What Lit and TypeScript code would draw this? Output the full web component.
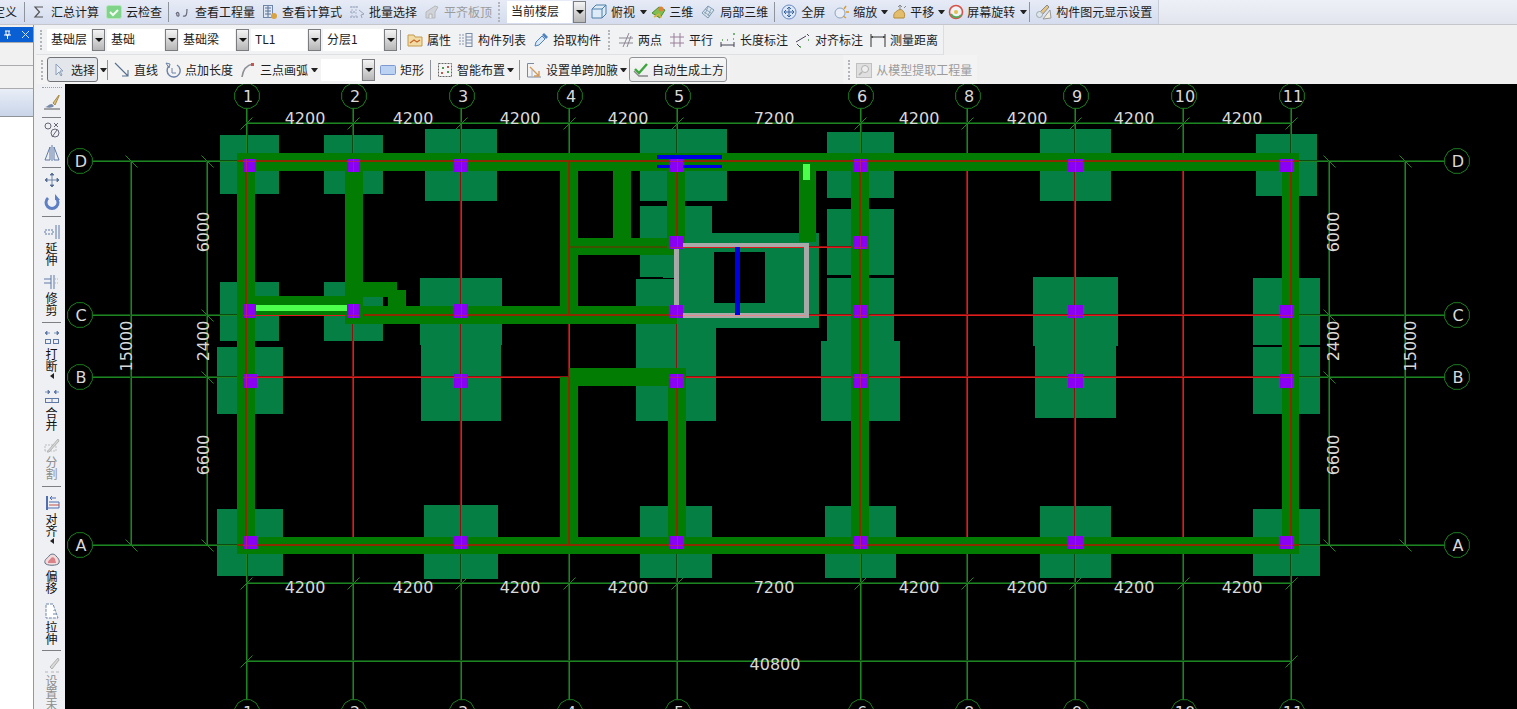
import { LitElement, html, css, svg, nothing } from 'lit';
import { customElement } from 'lit/decorators.js';

type Box = [number, number, number, number];

// ---- plan data (page coordinates, the svg viewBox starts at the canvas corner)
const GX = [246, 353, 461, 569, 677, 860, 967, 1075, 1183, 1291];
const GX_NAMES = ['1', '2', '3', '4', '5', '6', '8', '9', '10', '11'];
const GY = [161, 315, 377, 545];
const GY_NAMES = ['D', 'C', 'B', 'A'];

const FOOTINGS: Box[] = [
  [220, 135, 279, 194], [324, 135, 383, 194], [425, 129, 497, 201], [640, 129, 727, 201],
  [827, 132, 894, 198], [1040, 129, 1111, 201], [1256, 134, 1317, 196],
  [220, 282, 279, 341], [324, 282, 383, 341], [420, 278, 502, 345], [421, 345, 501, 421],
  [217, 347, 283, 414], [640, 206, 712, 278], [675, 233, 819, 328], [636, 279, 716, 421],
  [827, 209, 894, 275], [827, 278, 894, 342], [821, 341, 900, 421],
  [1033, 277, 1118, 346], [1035, 346, 1116, 418], [1253, 278, 1320, 345], [1253, 347, 1320, 414],
  [217, 509, 283, 576], [424, 505, 498, 579], [640, 506, 712, 578], [825, 506, 896, 578],
  [1040, 506, 1111, 578], [1253, 509, 1320, 576],
];
const HOLES: Box[] = [[714, 252, 765, 303]];
const BEAMS: Box[] = [
  [237, 153, 1299, 171], [237, 537, 1299, 554], [237, 153, 255, 554], [345, 153, 363, 315],
  [1282, 153, 1299, 554], [851, 153, 869, 554], [560, 153, 578, 324], [560, 377, 578, 554],
  [569, 368, 677, 386], [668, 368, 686, 554], [667, 153, 685, 247], [613, 153, 631, 238],
  [569, 238, 677, 255], [345, 306, 677, 324], [255, 296, 345, 315], [345, 282, 397, 297],
  [388, 290, 406, 306], [799, 153, 816, 242],
];
// red axis lines as they run inside the beams
const CORES: Box[] = [
  [237, 160, 1299, 162], [237, 544, 1299, 546], [245, 161, 247, 545],
  [1290, 161, 1292, 545], [859, 161, 861, 545], [568, 161, 570, 315], [568, 377, 570, 545],
  [676, 161, 678, 247], [676, 377, 678, 545], [363, 314, 677, 316],
];
const CORE_DIM: Box[] = [[569, 246, 667, 248]];
const LIGHT_FOOT: Box[] = [[363, 297, 383, 306]];
const DOTS: Box[] = [[383, 299, 388, 306], [640, 277, 663, 278], [640, 201, 667, 206], [685, 201, 712, 206]];
const FRAME: Box[] = [[674, 243, 679, 318], [679, 243, 809, 247], [804, 243, 809, 318], [674, 313, 809, 318]];
const BLUE: Box[] = [[657, 155, 722, 159], [657, 165, 722, 168], [735, 247, 740, 315]];
const BRIGHT: Box[] = [[256, 305, 347, 311], [803, 164, 810, 180]];

const COLS: Box[] = [
  [243, 159, 13, 13], [347, 159, 13, 13], [454, 159, 14, 13], [670, 159, 13, 13], [854, 159, 13, 13], [1068, 159, 15, 13], [1280, 159, 13, 13],
  [670, 236, 13, 13], [854, 236, 13, 13],
  [243, 304, 13, 14], [347, 304, 13, 14], [454, 304, 14, 14], [670, 305, 13, 13], [854, 305, 13, 13], [1068, 305, 15, 13], [1280, 305, 13, 13],
  [243, 374, 14, 14], [454, 374, 14, 14], [669, 374, 14, 14], [853, 374, 14, 14], [1068, 374, 15, 14], [1280, 374, 13, 14],
  [243, 536, 14, 13], [454, 536, 14, 13], [669, 536, 14, 13], [853, 536, 14, 13], [1068, 536, 15, 13], [1280, 536, 13, 13],
];

const SPANS: [number, string][] = [
  [305, '4200'], [413, '4200'], [520, '4200'], [628, '4200'], [774, '7200'],
  [919, '4200'], [1027, '4200'], [1134, '4200'], [1242, '4200'],
];

const GREEN: [string, string] = ['#1c8420', '#0e4a12'];
const RED: [string, string] = ['#e01c1c', '#8c1212'];

const rects = (list: Box[], fill: string) =>
  list.map(([a, b, c, d]) => svg`<rect x=${a} y=${b} width=${c - a} height=${d - b} fill=${fill}></rect>`);

// the reference lines are a bit soft: one full pixel plus a dim neighbour on the even/odd pair
const pair = (v: number) => v - (v % 2);
const hl = (y: number, a: number, b: number, [c, dim]: [string, string]) => svg`
  <rect x=${a} y=${pair(y)} width=${b - a} height="2" fill=${dim}></rect>
  <rect x=${a} y=${y} width=${b - a} height="1" fill=${c}></rect>`;
const vl = (x: number, a: number, b: number, [c, dim]: [string, string]) => svg`
  <rect x=${pair(x)} y=${a} width="2" height=${b - a} fill=${dim}></rect>
  <rect x=${x} y=${a} width="1" height=${b - a} fill=${c}></rect>`;

const bubble = (cx: number, cy: number, name: string) => {
  const pts = Array.from({ length: 12 }, (_, i) => {
    const a = (Math.PI / 6) * i + Math.PI / 12;
    return `${(cx + 12.7 * Math.cos(a)).toFixed(1)},${(cy + 12.7 * Math.sin(a)).toFixed(1)}`;
  }).join(' ');
  return svg`<polygon class="bubble" points=${pts}></polygon>
    <text class="dim" x=${cx + 1} y=${cy + 6} text-anchor="middle">${name}</text>`;
};

const tick = (x: number, y: number, up = true) =>
  svg`<line class="thin" x1=${x - 6} y1=${up ? y + 6 : y - 6} x2=${x + 6} y2=${up ? y - 6 : y + 6}></line>`;

const vtext = (x: number, y: number, t: string) =>
  svg`<text class="dim" text-anchor="middle" transform="translate(${x} ${y}) rotate(-90)">${t}</text>`;

const nearest = (list: number[], v: number) => list.reduce((p, c) => (Math.abs(c - v) < Math.abs(p - v) ? c : p));

// ---- toolbar icons, all on a 16x16 box
const ICONS: Record<string, unknown> = {
  sigma: svg`<path d="M12 3H4L8.5 8 4 13H12" fill="none" stroke="#555" stroke-width="1.2"/>`,
  cloud: svg`<rect x="0.5" y="1.5" width="15" height="13" rx="2" fill="#7fd48a" stroke="#b8e6bd"/><path d="M4 8l3 3 5-5" fill="none" stroke="#f2fbf0" stroke-width="2"/>`,
  qty: svg`<path d="M1 10c2-3 3-1 3 1s-3 1-2-1M8 12c3 1 4-1 4-7" fill="none" stroke="#667" stroke-width="1.2"/>`,
  calc: svg`<rect x="1.5" y="1.5" width="9" height="12" fill="#dfe7f3" stroke="#6f86a8"/><path d="M3 4h6M3 7h6M3 10h6M6 2v11" stroke="#5a7299"/><circle cx="12" cy="12" r="3" fill="#d9a344"/>`,
  batch: svg`<path d="M1 3h8M1 8h5M1 13h8" stroke="#8c99b5" stroke-dasharray="2 1"/><path d="M3 2v12M7 2v12" stroke="#aab4c9" stroke-dasharray="2 1"/><path d="M10 6l5 4-3 1 1 3" fill="none" stroke="#9aa5ba"/>`,
  flat: svg`<path d="M2 14V8l9-6 3 1-3 5v6z" fill="#cfd1d4" stroke="#aeb1b5"/><path d="M5 14v-4h3v4" fill="#eee" stroke="#aaa"/>`,
  cube: svg`<path d="M1 5l4-4h10v9l-4 4H1z" fill="#dcebf7" stroke="#4d7ea8"/><path d="M1 5h10v9M11 5l4-4" fill="none" stroke="#4d7ea8"/>`,
  three: svg`<path d="M1 9l7-6 6 3-5 8z" fill="#7fbf52" stroke="#4c8e35"/><circle cx="10" cy="5" r="2.5" fill="#e0833a"/><path d="M3 13l5-3 2 4" fill="none" stroke="#d7b13a" stroke-width="1.5"/>`,
  local: svg`<path d="M2 9l6-7 6 4-6 8z" fill="#dbe6ee" stroke="#7d98ae"/><path d="M5 5l6 4M4 8l6 4M8 3l-3 7M11 5l-3 7" stroke="#7d98ae" stroke-width=".8"/>`,
  full: svg`<circle cx="8" cy="8" r="7" fill="#dbe6f6" stroke="#6c8cc0"/><path d="M8 3v10M3 8h10M8 3l-2 2M8 3l2 2M8 13l-2-2M8 13l2-2M3 8l2-2M3 8l2 2M13 8l-2-2M13 8l-2 2" fill="none" stroke="#39649f"/>`,
  zoom: svg`<circle cx="7" cy="9" r="5" fill="#e9eef6" stroke="#8ea3c0"/><path d="M11 5l2-3M13 8h3M10 12l3 2" stroke="#d99b2b" stroke-width="1.4"/>`,
  pan: svg`<path d="M2 14c-1-4 1-6 3-7 2-2 5-2 6 0 2 2 2 5 1 7z" fill="#e2bd6c" stroke="#b58a35"/><path d="M8 6V1M6 3l2-2 2 2M12 4l2-2" fill="none" stroke="#8a8a8a"/>`,
  spin: svg`<circle cx="8" cy="8" r="6.5" fill="#eef3f5" stroke="#d7534a" stroke-width="1.6"/><path d="M3 10a6 6 0 0 0 10 1" fill="none" stroke="#51a85a" stroke-width="1.8"/><circle cx="8" cy="8" r="2" fill="#e2c04f"/>`,
  show: svg`<path d="M7 15l8-1-1-8z" fill="#f3eedb" stroke="#999"/><path d="M3 9l8-8 2 2-7 8z" fill="#e4c680" stroke="#8b8b8b"/><circle cx="3.5" cy="10.5" r="3" fill="#dfe5ec" stroke="#9aa"/>`,
  props: svg`<path d="M1 3h6l1 2h7v9H1z" fill="#f2dca6" stroke="#c39a4e"/><path d="M3 11l4-3 3 2 3-2" fill="none" stroke="#c86a2e" stroke-width="1.4"/>`,
  list: svg`<path d="M2 2v12M5 2v12" stroke="#8b98ad" stroke-dasharray="2 1"/><rect x="8" y="1.5" width="6" height="13" fill="#f2f4f8" stroke="#7b8aa3"/><path d="M8 5h6M8 8h6M8 11h6" stroke="#7b8aa3"/>`,
  picker: svg`<path d="M2 14l1-4 6-6 3 3-6 6z" fill="#dbe9f7" stroke="#4f83bd"/><path d="M9 3l2-2 4 4-2 2z" fill="#4f83bd"/>`,
  two: svg`<path d="M1 11h14M1 6h14M5 15L11 1M9 15l4-11" fill="none" stroke="#8d8794"/>`,
  par: svg`<path d="M1 5h14M1 11h14M5 1v14M11 1v14" fill="none" stroke="#9a7f9a"/>`,
  lendim: svg`<path d="M1 10v5M14 10v5M1 13h13" fill="none" stroke="#445"/><path d="M2 8h1M7 8h1M13 2h2M13 7h1" stroke="#4f9a4f" stroke-width="1.4"/>`,
  aligndim: svg`<path d="M2 12l3 3M1 10l10-6M12 2l2 2" fill="none" stroke="#445"/><path d="M5 15h1M13 8h1" stroke="#4f9a4f" stroke-width="1.4"/>`,
  measure: svg`<path d="M1 2v13M15 2v13M1 5h14" fill="none" stroke="#333"/><path d="M1 5l2-1v2zM15 5l-2-1v2z" fill="#333"/>`,
  cursor: svg`<path d="M5 2v11l3-3 2 4 1-1-2-4h3z" fill="#e8eef6" stroke="#8d9fb8"/>`,
  line: svg`<path d="M1 1l13 13M14 8v6H8" fill="none" stroke="#55708f" stroke-width="1.1"/>`,
  ptlen: svg`<path d="M4 4A6.5 6.5 0 1 0 12 3" fill="none" stroke="#6c82a8" stroke-width="1.4"/><path d="M1 1l4 1-1 4zM7 6v5h4" fill="none" stroke="#6c82a8"/>`,
  arc: svg`<path d="M2 15C3 8 7 3 13 2" fill="none" stroke="#8c8f93" stroke-width="1.6"/><path d="M11 1h3v3h-3z" fill="#c9534e"/>`,
  rect: svg`<rect x="0.5" y="3.5" width="15" height="9" rx="1" fill="#bcd2f2" stroke="#7d9ad0"/>`,
  smart: svg`<rect x="1.5" y="1.5" width="13" height="13" fill="#f5f5f5" stroke="#666" stroke-dasharray="2 1"/><path d="M5 5h2v2H5zM10 9h2v2h-2z" fill="#4e9a4e"/><path d="M10 4h2v2h-2zM4 10h2v2H4z" fill="#c0564e"/>`,
  haunch: svg`<path d="M1.5 15V1.5H8M1.5 15H15" fill="none" stroke="#7c8aa0"/><path d="M4 5l9 9M13 9v5H8" fill="none" stroke="#d39a5a" stroke-width="1.4"/><path d="M6 15V8" stroke="#9fb6d3"/>`,
  earth: svg`<path d="M1 9l5 5h9" fill="none" stroke="#888" stroke-width="1.4"/><path d="M2 7l4 4 8-9" fill="none" stroke="#3ea63e" stroke-width="2.4"/>`,
  extract: svg`<rect x="0.5" y="1.5" width="15" height="14" fill="#dcdcdc" stroke="#b8b8b8"/><circle cx="9" cy="7" r="3.5" fill="#eee" stroke="#a6a6a6"/><path d="M6 10l-3 3" stroke="#a6a6a6" stroke-width="1.6"/>`,
  brush: svg`<path d="M15 1l-6 8 2 2 4-9z" fill="#dcc07a" stroke="#a98b45"/><path d="M1 13c3 0 3-3 7-3l2 2c-2 2-5 2-9 1z" fill="#7687a8"/><path d="M0 15h16" stroke="#555"/>`,
  copyo: svg`<circle cx="4" cy="4" r="3" fill="none" stroke="#667"/><circle cx="11" cy="11" r="4" fill="none" stroke="#667"/><path d="M10 1l4 4M14 1l-4 4M8 15l5-7" stroke="#667"/>`,
  mirror: svg`<path d="M6 2v13H1zM10 2v13h5zM8 0v16" fill="none" stroke="#5e79a8"/>`,
  move: svg`<path d="M8 1v14M1 8h14M8 1L6 3h4zM8 15l-2-2h4zM1 8l2-2v4zM15 8l-2-2v4z" fill="#546c96" stroke="#546c96" stroke-width=".8"/>`,
  rotate: svg`<path d="M12 4a6 6 0 1 1-8 0" fill="none" stroke="#5f7fc4" stroke-width="3"/><path d="M11 0v6h5z" fill="#5f7fc4"/>`,
  extend: svg`<path d="M15 1v14M12 1v14" stroke="#5e79a8"/><path d="M1 6h8v4H1z" fill="none" stroke="#5e79a8" stroke-dasharray="2 1"/>`,
  trim: svg`<path d="M7 1v14M10 1v14" stroke="#5e79a8"/><path d="M0 5h7M0 9h7" stroke="#5e79a8"/><path d="M11 5h4M11 9h4" stroke="#aab6cc" stroke-dasharray="1 1"/>`,
  breakit: svg`<path d="M6 3H1M1 3l2-2v4zM10 3h5M15 3l-2-2v4z" fill="#5e79a8" stroke="#5e79a8" stroke-width=".8"/><rect x="1.5" y="9.5" width="5" height="4" fill="none" stroke="#5e79a8"/><rect x="9.5" y="9.5" width="5" height="4" fill="none" stroke="#5e79a8"/>`,
  merge: svg`<path d="M1 3h5M6 3L4 1v4zM15 3h-5M10 3l2-2v4z" fill="#5e79a8" stroke="#5e79a8" stroke-width=".8"/><rect x="1.5" y="9.5" width="13" height="4" fill="none" stroke="#5e79a8"/><path d="M8 9v5" stroke="#5e79a8"/>`,
  split: svg`<path d="M1 13V7h11v6z" fill="none" stroke="#bdbdbd" stroke-dasharray="2 1"/><path d="M3 14L14 1l1 2L5 14z" fill="#d7d7d7" stroke="#b4b4b4"/>`,
  align: svg`<path d="M3 1v14" stroke="#4f6fb0" stroke-width="2"/><path d="M3 13h12V7H5" fill="none" stroke="#4f6fb0"/><path d="M5 10h10" stroke="#c0564e"/><path d="M12 3H6l2-2M6 3l2 2" fill="none" stroke="#4f6fb0"/>`,
  offset: svg`<path d="M1 11c-1-4 3-5 4-7 2-3 6-2 7 0 2 2 4 4 3 7-1 3-13 3-14 0z" fill="#f2dada" stroke="#5f6f88"/><path d="M4 11c0-3 2-3 3-5 1-1 3-1 4 1l1 4z" fill="#d9828a"/>`,
  stretch: svg`<path d="M2 1h7l5 14H2z" fill="#fff" stroke="#6f86a8" stroke-dasharray="3 1"/><path d="M10 7v1M9 11h3" stroke="#6f86a8"/>`,
  setp: svg`<path d="M14 1L6 10l2 2 7-9z" fill="#d9d9d9" stroke="#b0b0b0"/><path d="M1 15h3M7 15h3M12 15h3" stroke="#b5b5b5"/>`,
};

const icon = (name: string) => html`<svg class="ic" viewBox="0 0 16 16">${ICONS[name]}</svg>`;

type Item = {
  k: 'text' | 'sep' | 'grip' | 'tool' | 'arrow' | 'combo' | 'boxed';
  ml: number;
  icon?: string;
  label?: string;
  g?: number;
  dis?: boolean;
  w?: number;
  pick?: boolean;
};

const tool = (ml: number, ic: string, label: string, g?: number, dis?: boolean): Item => ({ k: 'tool', ml, icon: ic, label, g, dis });
const sep = (ml: number): Item => ({ k: 'sep', ml });
const grip = (ml: number): Item => ({ k: 'grip', ml });
const arrow = (ml: number): Item => ({ k: 'arrow', ml });
const combo = (ml: number, w: number, label: string): Item => ({ k: 'combo', ml, w, label });

const ROW1: Item[] = [
  { k: 'text', ml: -7, label: '定义' }, sep(7), tool(6, 'sigma', '汇总计算'), tool(7, 'cloud', '云检查'), sep(6),
  tool(6, 'qty', '查看工程量'), tool(7, 'calc', '查看计算式'), tool(7, 'batch', '批量选择'), tool(7, 'flat', '平齐板顶', 4, true),
  grip(6), combo(7, 65, '当前楼层'), tool(5, 'cube', '俯视'), arrow(5), tool(4, 'three', '三维', 2), tool(7, 'local', '局部三维'), sep(6),
  tool(6, 'full', '全屏'), tool(8, 'zoom', '缩放'), arrow(4), tool(4, 'pan', '平移', 2), arrow(4), tool(3, 'spin', '屏幕旋转', 3), arrow(5), sep(2),
  tool(6, 'show', '构件图元显示设置'),
];
const ROW2: Item[] = [
  grip(4), combo(5, 44, '基础层'), combo(2, 57, '基础'), combo(1, 56, '基础梁'), combo(2, 56, 'TL1'), combo(2, 60, '分层1'), sep(3),
  tool(6, 'props', '属性'), tool(7, 'list', '构件列表'), tool(7, 'picker', '拾取构件'), grip(7),
  tool(8, 'two', '两点'), tool(7, 'par', '平行'), tool(7, 'lendim', '长度标注'), tool(7, 'aligndim', '对齐标注'), tool(7, 'measure', '测量距离'),
];
const ROW3: Item[] = [
  grip(5), { k: 'boxed', ml: 4, icon: 'cursor', label: '选择', pick: true }, arrow(2), sep(0),
  tool(6, 'line', '直线'), tool(7, 'ptlen', '点加长度'), tool(7, 'arc', '三点画弧'), arrow(3), combo(3, 40, ''), tool(5, 'rect', '矩形'), sep(6),
  tool(6, 'smart', '智能布置'), arrow(2), sep(5), tool(6, 'haunch', '设置单跨加腋'), arrow(2),
  { k: 'boxed', ml: 2, icon: 'earth', label: '自动生成土方' },
];
const ROW3B: Item[] = [grip(5), tool(6, 'extract', '从模型提取工程量', 4, true)];

type Side = { k: 'sep' | 'grip' | 'btn'; mt: number; icon?: string; label?: string; more?: boolean; dis?: boolean };
const SIDE: Side[] = [
  { k: 'grip', mt: 3 },
  { k: 'btn', mt: 5, icon: 'brush' }, { k: 'sep', mt: 7 },
  { k: 'btn', mt: 4, icon: 'copyo' }, { k: 'btn', mt: 7, icon: 'mirror' }, { k: 'sep', mt: 6 },
  { k: 'btn', mt: 4, icon: 'move' }, { k: 'btn', mt: 6, icon: 'rotate' }, { k: 'sep', mt: 6 },
  { k: 'btn', mt: 7, icon: 'extend', label: '延伸' }, { k: 'btn', mt: 8, icon: 'trim', label: '修剪' }, { k: 'sep', mt: 6 },
  { k: 'btn', mt: 7, icon: 'breakit', label: '打断', more: true }, { k: 'btn', mt: 10, icon: 'merge', label: '合并' },
  { k: 'btn', mt: 7, icon: 'split', label: '分割', dis: true }, { k: 'sep', mt: 6 },
  { k: 'btn', mt: 8, icon: 'align', label: '对齐', more: true }, { k: 'btn', mt: 8, icon: 'offset', label: '偏移' },
  { k: 'btn', mt: 9, icon: 'stretch', label: '拉伸' }, { k: 'sep', mt: 5 },
  { k: 'btn', mt: 6, icon: 'setp', label: '设置未', dis: true },
];

@customElement('app-root')
export class AppRoot extends LitElement {
  static override styles = css`
    :host {
      display: flex;
      flex-direction: column;
      width: 1517px;
      height: 709px;
      overflow: hidden;
      background: #f0f0f0;
      font: 12px/16px 'Noto Sans CJK SC', 'Liberation Sans', sans-serif;
      color: #1c1c1c;
    }
    .top {
      flex: none;
      height: 24px;
      display: flex;
      background: linear-gradient(#eef0f6, #e2e5ee);
      border-bottom: 1px solid #c4c6cc;
    }
    .bar {
      display: flex;
      align-items: center;
      height: 100%;
    }
    .bar.main {
      background: linear-gradient(#e6ebf6, #d4dcee);
      padding-right: 6px;
      border-right: 1px solid #c6ccd8;
    }
    .body {
      flex: 1;
      min-height: 0;
      display: flex;
    }
    .dock {
      flex: none;
      width: 33px;
      border-right: 1px solid #96989c;
      margin-right: 2px;
      display: flex;
      flex-direction: column;
      background: #fff;
    }
    .dock-pad { height: 2px; background: #f0f0f0; }
    .dock-head {
      height: 15px;
      background: #0a5fd2;
      display: flex;
      align-items: center;
      justify-content: space-between;
      padding: 0 3px;
    }
    .dock-head svg { width: 9px; height: 9px; }
    .dock-row { height: 22px; background: #f1f1f1; border-top: 1px solid #a9abae; }
    .dock-sec {
      height: 27px;
      border-top: 1px solid #a9abae;
      border-bottom: 1px solid #8f9297;
      background: linear-gradient(#e9eef7, #c9d5e9);
    }
    .right {
      flex: 1;
      min-width: 0;
      display: flex;
      flex-direction: column;
    }
    .r2 { flex: none; height: 30px; display: flex; }
    .r3 { flex: none; height: 29px; display: flex; }
    .r2 .bar { background: #f1f2f4; padding-right: 5px; border-right: 1px solid #dcdde0; border-bottom: 1px solid #dfe0e3; box-sizing: border-box; }
    .r3 .bar { background: #f3f3f4; padding-right: 3px; box-sizing: border-box; }
    .r3 .bar.far { margin-left: 113px; padding-right: 5px; }
    .work { flex: 1; min-height: 0; display: flex; }
    .side {
      flex: none;
      width: 29px;
      height: 625px;
      overflow: hidden;
      background: #eef0f4;
      display: flex;
      flex-direction: column;
      align-items: center;
      padding-left: 2px;
      box-sizing: border-box;
    }
    .side .s-sep { flex: none; width: 19px; height: 1px; background: #7d7f84; }
    .side .s-grip { flex: none; width: 20px; height: 2px; border-top: 1px dotted #9a9ca0; box-sizing: border-box; }
    .side .s-btn { flex: none; display: flex; flex-direction: column; align-items: center; }
    .side .s-label { width: 12px; line-height: 12px; margin-top: 2px; text-align: center; color: #111; word-break: break-all; }
    .side .dis .s-label { color: #8d8d8d; }
    .side .s-more {
      width: 0;
      height: 0;
      margin-top: 1px;
      border: 3px solid transparent;
      border-left: 0;
      border-right: 4px solid #222;
    }
    .ic { flex: none; width: 16px; height: 16px; display: block; }
    .tool { flex: none; display: flex; align-items: center; white-space: nowrap; }
    .tool.dis { color: #9b9b9b; }
    .tool.dis .ic { opacity: 0.85; }
    .plain { flex: none; white-space: nowrap; }
    .sep { flex: none; width: 1px; height: 20px; background: #8f939b; }
    .grip { flex: none; width: 2px; height: 20px; border-left: 2px dotted #b3b5ba; box-sizing: border-box; }
    .arrow {
      flex: none;
      width: 7px;
      height: 0;
      box-sizing: border-box;
      border-top: 4px solid #222;
      border-left: 3.5px solid transparent;
      border-right: 3.5px solid transparent;
    }
    .combo { flex: none; display: flex; gap: 1px; height: 22px; }
    .combo-val { background: #fff; padding-left: 4px; box-sizing: border-box; line-height: 20px; white-space: nowrap; overflow: hidden; }
    .combo-btn {
      width: 13px;
      box-sizing: border-box;
      border: 1px solid #7b7c80;
      background: linear-gradient(#f4f4f4, #b6b6b6);
      display: flex;
      align-items: center;
      justify-content: center;
    }
    .combo-btn::after {
      content: '';
      border-top: 4px solid #111;
      border-left: 4px solid transparent;
      border-right: 4px solid transparent;
    }
    .boxed {
      flex: none;
      display: flex;
      align-items: center;
      gap: 3px;
      height: 23px;
      padding: 0 2px 0 3px;
      border: 1px solid #8e9196;
      border-radius: 3px;
      background: linear-gradient(#f7f7f7, #ebebeb);
      white-space: nowrap;
    }
    .boxed.pick { gap: 4px; padding-right: 2px; background: #e3e6ea; border-color: #6f7277; }
    .canvas { flex: 1; min-width: 0; background: #000; display: block; width: 1452px; height: 625px; }
    .thin { stroke: #1c8420; stroke-width: 1; fill: none; shape-rendering: geometricPrecision; }
    .bubble { stroke: #1c7c20; stroke-width: 1; fill: #000; shape-rendering: geometricPrecision; }
    .dim { fill: #d9d9d9; font: 16px 'DejaVu Sans', sans-serif; }
  `;

  private renderItem(it: Item) {
    const ml = `margin-left:${it.ml}px`;
    switch (it.k) {
      case 'text':
        return html`<span class="plain" style=${ml}>${it.label}</span>`;
      case 'sep':
        return html`<span class="sep" style=${ml}></span>`;
      case 'grip':
        return html`<span class="grip" style=${ml}></span>`;
      case 'arrow':
        return html`<span class="arrow" style=${ml}></span>`;
      case 'combo':
        return html`<span class="combo" style=${ml}>
          <span class="combo-val" style="width:${it.w}px">${it.label}</span><span class="combo-btn"></span>
        </span>`;
      case 'boxed':
        return html`<span class="boxed ${it.pick ? 'pick' : ''}" style=${ml}>${icon(it.icon!)}<span>${it.label}</span></span>`;
      default:
        return html`<span class="tool ${it.dis ? 'dis' : ''}" style="${ml};gap:${it.g ?? 4}px">${icon(it.icon!)}<span>${it.label}</span></span>`;
    }
  }

  private renderSide(s: Side) {
    const mt = `margin-top:${s.mt}px`;
    if (s.k === 'sep') return html`<div class="s-sep" style=${mt}></div>`;
    if (s.k === 'grip') return html`<div class="s-grip" style=${mt}></div>`;
    return html`<div class="s-btn ${s.dis ? 'dis' : ''}" style=${mt}>
      ${icon(s.icon!)}
      ${s.label ? html`<div class="s-label">${s.label}</div>` : nothing}
      ${s.more ? html`<div class="s-more"></div>` : nothing}
    </div>`;
  }

  private renderPlan() {
    const [top, , , bottom] = GY;
    const x0 = GX[0];
    const x1 = GX[GX.length - 1];
    return html`<svg class="canvas" viewBox="65 84 1452 625" shape-rendering="crispEdges">
      ${rects(FOOTINGS, '#067f45')}
      ${GX.map((x) => vl(x, 108, 700, GREEN))}
      ${GY.map((y) => hl(y, 92, 1445, GREEN))}
      ${[123, 583, 661].map((y) => hl(y, x0, x1, GREEN))}
      ${[207, 131, 1329, 1405].map((x) => vl(x, top, bottom, GREEN))}

      ${GX.map((x) => vl(x, top, bottom, RED))}
      ${GY.map((y) => hl(y, x0, x1, RED))}
      ${hl(247, 569, 860, RED)}
      ${rects(HOLES, '#000')}
      ${rects(BEAMS, '#037c03')}
      ${rects(LIGHT_FOOT, '#067f45')}
      ${rects(DOTS, '#000')}
      ${rects(CORES, '#8a2c00')}
      ${rects(CORE_DIM, '#3e5200')}
      ${rects(FRAME, '#a9a9a9')}
      <rect x="677" y="247" width="1" height="68" fill="#e58a8a"></rect>
      <rect x="679" y="315" width="127" height="1" fill="#e58a8a"></rect>
      ${rects(BLUE, '#0000e6')}
      ${rects(BRIGHT, '#4cff4c')}
      ${COLS.map(([x, y, w, h]) => svg`<rect x=${x} y=${y} width=${w} height=${h} fill="#8a00f5"></rect>
        <rect x=${nearest(GX, x + w / 2)} y=${y} width="1" height=${h} fill="#b01a7a"></rect>
        <rect x=${x} y=${nearest([...GY, 247], y + h / 2)} width=${w} height="1" fill="#b01a7a"></rect>`)}

      ${GX.map((x) => svg`${tick(x + 0.5, 123.5)}${tick(x + 0.5, 583.5)}`)}
      ${tick(x0 + 0.5, 661.5)}${tick(x1 + 0.5, 661.5)}
      ${GY.map((y) => svg`${tick(207.5, y + 0.5, false)}${tick(1329.5, y + 0.5, false)}`)}
      ${[161, 545].map((y) => svg`${tick(131.5, y + 0.5, false)}${tick(1405.5, y + 0.5, false)}`)}

      ${SPANS.map(([x, t]) => svg`<text class="dim" x=${x} y="124" text-anchor="middle">${t}</text>
        <text class="dim" x=${x} y="593" text-anchor="middle">${t}</text>`)}
      <text class="dim" x="775" y="670" text-anchor="middle">40800</text>
      ${vtext(209, 232, '6000')}${vtext(209, 341, '2400')}${vtext(209, 455, '6600')}${vtext(132, 346, '15000')}
      ${vtext(1339, 232, '6000')}${vtext(1339, 341, '2400')}${vtext(1339, 455, '6600')}${vtext(1416, 346, '15000')}

      ${GX.map((x, i) => svg`${bubble(x + 1, 96, GX_NAMES[i])}${bubble(x + 1, 712, GX_NAMES[i])}`)}
      ${GY.map((y, i) => svg`${bubble(80, y, GY_NAMES[i])}${bubble(1457, y, GY_NAMES[i])}`)}
    </svg>`;
  }

  override render() {
    return html`
      <div class="top"><div class="bar main">${ROW1.map((it) => this.renderItem(it))}</div></div>
      <div class="body">
        <div class="dock">
          <div class="dock-pad"></div>
          <div class="dock-head">
            <svg viewBox="0 0 9 9"><path d="M2 1h5M3 1v4h3V1M1 5h7M4.5 5v4" fill="none" stroke="#fff"></path></svg>
            <svg viewBox="0 0 9 9"><path d="M1 1l7 7M8 1L1 8" fill="none" stroke="#cfe0ff"></path></svg>
          </div>
          <div class="dock-row"></div>
          <div class="dock-row"></div>
          <div class="dock-sec"></div>
        </div>
        <div class="right">
          <div class="r2"><div class="bar">${ROW2.map((it) => this.renderItem(it))}</div></div>
          <div class="r3">
            <div class="bar">${ROW3.map((it) => this.renderItem(it))}</div>
            <div class="bar far">${ROW3B.map((it) => this.renderItem(it))}</div>
          </div>
          <div class="work">
            <div class="side">${SIDE.map((s) => this.renderSide(s))}</div>
            ${this.renderPlan()}
          </div>
        </div>
      </div>
    `;
  }
}
